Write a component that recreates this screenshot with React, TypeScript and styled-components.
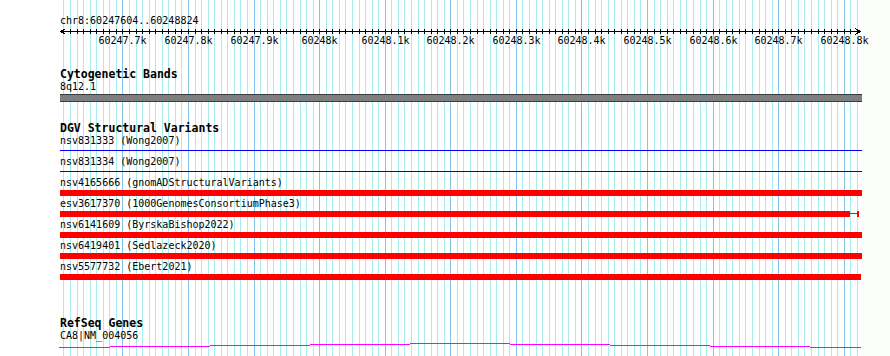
import React from 'react';
import styled, {createGlobalStyle} from 'styled-components';

const START = 60247604;
const END = 60248824;
const X0 = 60;
const VIEW_W = 800;

const toPx = (bp: number) => X0 + ((bp - START) * VIEW_W) / (END - START);

const gridStops: {x: number; major: boolean}[] = [];
for (let bp = 60247610; bp <= 60248820; bp += 10) {
  gridStops.push({x: Math.floor(toPx(bp)), major: bp % 100 === 0});
}

const labels = gridStops
  .filter(s => s.major)
  .map(s => {
    const bp = Math.round(((s.x + 0.5 - X0) * (END - START)) / VIEW_W + START);
    const k = Math.round(bp / 100) / 10;
    return {x: s.x, text: `${k}k`};
  });

const variants = [
  {name: 'nsv831333', study: 'Wong2007', kind: 'line'},
  {name: 'nsv831334', study: 'Wong2007', kind: 'line'},
  {name: 'nsv4165666', study: 'gnomADStructuralVariants', kind: 'bar', end: 862},
  {name: 'esv3617370', study: '1000GenomesConsortiumPhase3', kind: 'bar', end: 850, whisker: 859},
  {name: 'nsv6141609', study: 'ByrskaBishop2022', kind: 'bar', end: 862},
  {name: 'nsv6419401', study: 'Sedlazeck2020', kind: 'bar', end: 862},
  {name: 'nsv5577732', study: 'Ebert2021', kind: 'bar', end: 861},
];

// transcript line, drawn as it was rasterised (stair steps)
const geneSteps = [
  {from: 59, to: 110, y: 5},
  {from: 110, to: 210, y: 4},
  {from: 210, to: 310, y: 3},
  {from: 310, to: 410, y: 2},
  {from: 410, to: 510, y: 1},
  {from: 510, to: 610, y: 2},
  {from: 610, to: 710, y: 3},
  {from: 710, to: 810, y: 4},
  {from: 810, to: 861, y: 5},
];

const GlobalStyle = createGlobalStyle`
  html, body {
    margin: 0;
    padding: 0;
    background: #fbfdfb;
  }
  body {
    font-family: "DejaVu Sans Mono", "Liberation Mono", monospace;
    color: #000;
  }
`;

const Frame = styled.div`
  position: relative;
  width: 862px;
  height: 356px;
  background: #fff;
`;

const GridLayer = styled.div`
  position: absolute;
  inset: 0;
  pointer-events: none;
`;

const GridLine = styled.div<{$major: boolean}>`
  position: absolute;
  top: 0;
  bottom: 0;
  width: 1px;
  background: ${p => (p.$major ? '#84c4ea' : '#a8ecee')};
`;

const Tracks = styled.div`
  position: relative;
  display: flex;
  flex-direction: column;
  padding-left: ${X0}px;
`;

const Ruler = styled.div`
  display: flex;
  flex-direction: column;
  padding-top: 15px;
`;

const Location = styled.div`
  font-size: 10px;
  line-height: 12px;
  white-space: pre;
`;

const Axis = styled.svg`
  display: block;
  margin-left: -${X0}px;
  width: 862px;
  height: 7px;
  margin-top: 1px;
`;

const TickLabels = styled.div`
  position: relative;
  margin-left: -${X0}px;
  height: 12px;
`;

const TickLabel = styled.span`
  position: absolute;
  top: 0;
  transform: translateX(-50%);
  font-size: 10px;
  line-height: 12px;
  white-space: pre;
`;

const Track = styled.section<{$gap: number}>`
  display: flex;
  flex-direction: column;
  margin-top: ${p => p.$gap}px;
`;

const TrackTitle = styled.h3`
  margin: 0;
  font-size: 11.5px;
  line-height: 13px;
  font-weight: bold;
  white-space: pre;
`;

const FeatureLabel = styled.div`
  font-size: 10px;
  line-height: 12px;
  white-space: pre;
`;

const Band = styled.div`
  margin-top: 1px;
  width: 802px;
  height: 6px;
  background: #7f7f7f;
  border-top: 1px solid #3c3c3c;
  border-bottom: 1px solid #3c3c3c;
`;

const Row = styled.div`
  display: flex;
  flex-direction: column;
  height: 21px;
`;

const Glyph = styled.div`
  margin-top: 1px;
  height: 6px;
  display: flex;
  align-items: flex-start;
`;

const ThinLine = styled.div<{$w: number}>`
  margin-top: 2px;
  width: ${p => p.$w}px;
  height: 1px;
  background: #0000f0;
`;

const Bar = styled.div<{$w: number}>`
  width: ${p => p.$w}px;
  height: 6px;
  background: #ff0000;
  flex: none;
`;

const Whisker = styled.div<{$w: number}>`
  width: ${p => p.$w}px;
  height: 6px;
  flex: none;
  border-right: 2px solid #ff0000;
  box-sizing: border-box;
  background: linear-gradient(#ff0000, #ff0000) 0 2px / 100% 1px no-repeat;
`;

const GeneLine = styled.svg`
  display: block;
  margin-left: -${X0}px;
  width: 862px;
  height: 7px;
`;

export default function App() {
  return (
    <>
      <GlobalStyle />
      <Frame>
        <GridLayer>
          {gridStops.map(s => (
            <GridLine key={s.x} $major={s.major} style={{left: s.x}} />
          ))}
        </GridLayer>

        <Tracks>
          <Ruler>
            <Location>chr8:60247604..60248824</Location>
            <Axis viewBox="0 0 862 7" shapeRendering="crispEdges">
              <rect x={60} y={3} width={801} height={1} fill="#000" />
              {gridStops.map(s => (
                <rect key={s.x} x={s.x} y={1} width={1} height={5} fill="#000" />
              ))}
              <polyline points="65.5,0.5 60.5,3.5 65.5,6.5" fill="none" stroke="#000" strokeWidth={1} />
              <polyline points="855.5,0.5 860.5,3.5 855.5,6.5" fill="none" stroke="#000" strokeWidth={1} />
            </Axis>
            <TickLabels>
              {labels.map(l => (
                <TickLabel key={l.text} style={{left: l.x + 0.5}}>
                  {l.text}
                </TickLabel>
              ))}
            </TickLabels>
          </Ruler>

          <Track $gap={21}>
            <TrackTitle>Cytogenetic Bands</TrackTitle>
            <FeatureLabel>8q12.1</FeatureLabel>
            <Band />
          </Track>

          <Track $gap={20}>
            <TrackTitle>DGV Structural Variants</TrackTitle>
            {variants.map(v => (
              <Row key={v.name}>
                <FeatureLabel>
                  {v.name} ({v.study})
                </FeatureLabel>
                <Glyph>
                  {v.kind === 'line' ? (
                    <ThinLine $w={802} />
                  ) : (
                    <>
                      <Bar $w={(v.end ?? 862) - X0} />
                      {v.whisker && <Whisker $w={v.whisker - (v.end ?? 0)} />}
                    </>
                  )}
                </Glyph>
              </Row>
            ))}
          </Track>

          <Track $gap={35}>
            <TrackTitle>RefSeq Genes</TrackTitle>
            <FeatureLabel>CA8|NM_004056</FeatureLabel>
            <GeneLine viewBox="0 0 862 7" shapeRendering="crispEdges">
              {geneSteps.map(s => (
                <rect key={s.from} x={s.from} y={s.y} width={s.to - s.from} height={1} fill="#ff00ff" />
              ))}
            </GeneLine>
          </Track>
        </Tracks>
      </Frame>
    </>
  );
}
